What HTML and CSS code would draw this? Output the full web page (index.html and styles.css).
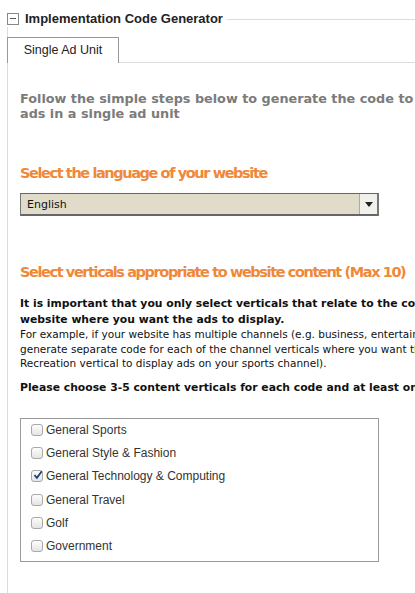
FILE: index.html
```html
<!DOCTYPE html>
<html>
<head>
<meta charset="utf-8">
<link rel="stylesheet" href="styles.css">
</head>
<body>
<fieldset class="panel">
  <legend class="panel-legend"><span class="toggle"></span>Implementation Code Generator</legend>
  <div class="tabs">
    <div class="tab">Single Ad Unit</div>
    <div class="tab-line"></div>
  </div>
  <div class="content">
    <h2 class="intro">Follow the simple steps below to generate the code to<br>ads in a single ad unit</h2>
    <h3 class="step">Select the language of your website</h3>
    <div class="select">
      <span class="select-value">English</span>
      <span class="select-btn"><svg width="8" height="5" viewBox="0 0 8 5"><path d="M0 0h8L4 5z" fill="#222"/></svg></span>
    </div>
    <h3 class="step step2">Select verticals appropriate to website content (Max 10)</h3>
    <p class="strong">It is important that you only select verticals that relate to the content of your<br>website where you want the ads to display.</p>
    <p class="normal">For example, if your website has multiple channels (e.g. business, entertainment, sports),<br>generate separate code for each of the channel verticals where you want the ads (e.g. Sports &amp;<br>Recreation vertical to display ads on your sports channel).</p>
    <p class="strong choose">Please choose 3-5 content verticals for each code and at least one</p>
    <div class="list">
      <label class="item"><span class="cb"></span>General Sports</label>
      <label class="item"><span class="cb"></span>General Style &amp; Fashion</label>
      <label class="item"><span class="cb checked"><svg width="12" height="12" viewBox="0 0 12 12"><path d="M2.5 6.2l2.4 2.6L9.8 2.2" fill="none" stroke="#1f3e73" stroke-width="1.8"/></svg></span>General Technology &amp; Computing</label>
      <label class="item"><span class="cb"></span>General Travel</label>
      <label class="item"><span class="cb"></span>Golf</label>
      <label class="item"><span class="cb"></span>Government</label>
    </div>
  </div>
</fieldset>
</body>
</html>
```
FILE: styles.css
```css
html, body {
  margin: 0;
  padding: 0;
  background: #fff;
  overflow: hidden;
}
body {
  width: 415px;
  height: 593px;
}
.panel {
  margin: 11px 0 0 7px;
  padding: 0 0 40px 0;
  border: 1px solid #dcdcdc;
  border-right: none;
  width: 800px;
  min-width: 0;
}
.panel-legend {
  padding: 0 4px 0 0;
  margin-left: -1px;
  font-family: "Liberation Sans", Arial, sans-serif;
  font-weight: bold;
  font-size: 13px;
  color: #222;
  display: flex;
  align-items: center;
  line-height: 16px;
}
.toggle {
  display: inline-block;
  box-sizing: border-box;
  width: 12px;
  height: 12px;
  border: 1px solid #888;
  margin-right: 6px;
  position: relative;
}
.toggle::after {
  content: "";
  position: absolute;
  left: 2px;
  right: 2px;
  top: 4px;
  height: 1px;
  background: #555;
}
.tabs {
  display: flex;
  margin-top: 10px;
  margin-left: -1px;
}
.tab {
  box-sizing: border-box;
  width: 112px;
  height: 26px;
  border: 1px solid #999;
  border-bottom: none;
  font-family: "Liberation Sans", Arial, sans-serif;
  font-size: 12.5px;
  color: #222;
  text-align: center;
  line-height: 25px;
}
.tab-line {
  flex: 1;
  border-bottom: 1px solid #dcdcdc;
}
.content {
  padding-left: 12px;
}
.intro {
  margin: 28px 0 0;
  font-family: "DejaVu Sans", Verdana, sans-serif;
  font-weight: bold;
  font-size: 12.8px;
  line-height: 15px;
  color: #7b7b7b;
  white-space: nowrap;
}
.step {
  margin: 43px 0 0;
  font-family: "DejaVu Sans", Verdana, sans-serif;
  font-weight: bold;
  font-size: 14.5px;
  letter-spacing: -1.4px;
  line-height: 18px;
  color: #f0883a;
  white-space: nowrap;
}
.step2 {
  margin-top: 47px;
}
.select {
  box-sizing: border-box;
  margin-top: 11px;
  width: 359px;
  height: 23px;
  border-style: solid;
  border-width: 1px 2px 2px 1px;
  border-color: #666 #777 #666 #777;
  background: #e1dbca;
  display: flex;
  align-items: center;
  justify-content: space-between;
}
.select-value {
  padding-left: 6px;
  font-family: "DejaVu Sans", Verdana, sans-serif;
  font-size: 11px;
  color: #111;
}
.select-btn {
  width: 17px;
  height: 100%;
  background: #f2f0ea;
  border-left: 1px solid #aaa;
  display: flex;
  align-items: center;
  justify-content: center;
}
p {
  margin: 0;
  font-family: "DejaVu Sans", Verdana, sans-serif;
  font-size: 10.5px;
  line-height: 14.5px;
  color: #111;
  white-space: nowrap;
}
.strong {
  font-weight: bold;
  font-size: 10.8px;
  line-height: 16px;
  margin-top: 15px;
}
.normal {
  margin-top: -1px;
}
.choose {
  margin-top: 9px;
}
.list {
  box-sizing: border-box;
  margin-top: 22px;
  width: 359px;
  height: 144px;
  border: 1px solid #9a9a9a;
  padding: 0 0 0 10px;
  display: flex;
  flex-direction: column;
}
.item {
  display: flex;
  align-items: center;
  height: 23.2px;
  font-family: "Liberation Sans", Arial, sans-serif;
  font-size: 12px;
  color: #333;
}
.cb {
  box-sizing: border-box;
  width: 12px;
  height: 12px;
  border: 1px solid #a9a9a9;
  border-radius: 3px;
  background: linear-gradient(#fdfdfd, #e4e4e4);
  margin-right: 3px;
  position: relative;
  flex: none;
}
.cb svg {
  position: absolute;
  left: 0;
  top: -2px;
}
```
